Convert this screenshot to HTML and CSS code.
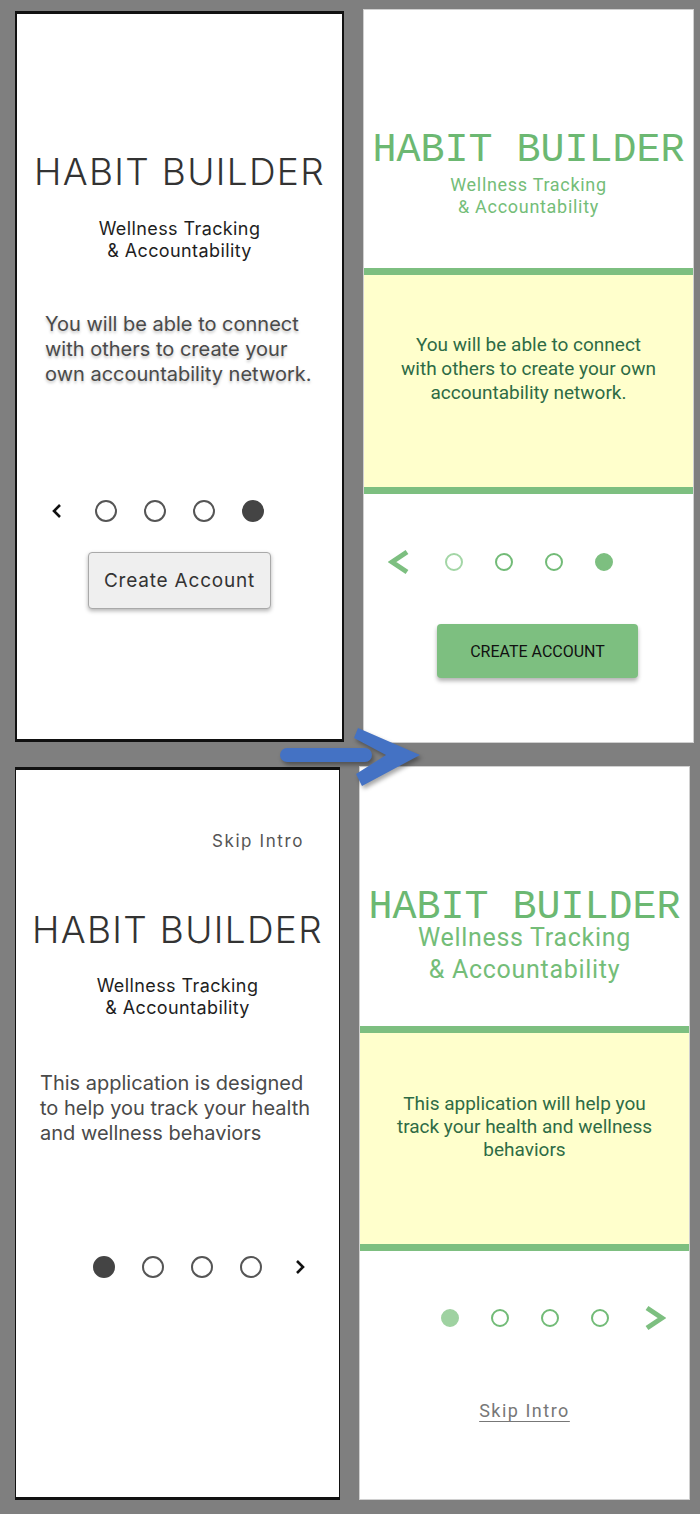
FILE: index.html
```html
<!DOCTYPE html>
<html lang="en">
<head>
  <meta charset="UTF-8">
  <meta name="viewport" content="width=device-width, initial-scale=1.0">
  <title>Habit Builder: Onboarding Wireframes</title>
  <link rel="stylesheet" href="styles.css">
</head>
<body>
  <div class="board">
    <div class="row row-top">
      <!-- wireframe: last intro screen -->
      <section class="screen sketch sketch-last">
        <h1 class="sketch-title">HABIT BUILDER</h1>
        <p class="sketch-tag">Wellness Tracking<br>&amp; Accountability</p>
        <p class="sketch-copy copy-shadow">You will be able to connect<br>with others to create your<br>own accountability network.</p>
        <div class="pager">
          <svg class="chev" viewBox="0 0 22 22"><polyline points="14,5 8,11 14,17"/></svg>
          <span class="dot"></span>
          <span class="dot"></span>
          <span class="dot"></span>
          <span class="dot on"></span>
          <svg class="chev hidden" viewBox="0 0 22 22"><polyline points="8,5 14,11 8,17"/></svg>
        </div>
        <button class="sketch-btn">Create Account</button>
      </section>

      <!-- mockup: last intro screen -->
      <section class="screen final final-top">
        <div class="final-head">
          <h1 class="final-title">HABIT BUILDER</h1>
          <p class="final-tag">Wellness Tracking<br>&amp; Accountability</p>
        </div>
        <div class="band">
          <p>You will be able to connect<br>with others to create your own<br>accountability network.</p>
        </div>
        <div class="pager pager-green">
          <svg class="chev-lg" viewBox="0 0 22 26"><polyline points="19,3 4,13 19,23"/></svg>
          <span class="dot faint"></span>
          <span class="dot"></span>
          <span class="dot"></span>
          <span class="dot on"></span>
          <svg class="chev-lg hidden" viewBox="0 0 22 26"><polyline points="3,3 18,13 3,23"/></svg>
        </div>
        <button class="final-btn">CREATE ACCOUNT</button>
      </section>
    </div>

    <div class="row row-bottom">
      <!-- wireframe: first intro screen -->
      <section class="screen sketch sketch-first">
        <a class="skip-top" href="#">Skip Intro</a>
        <h1 class="sketch-title">HABIT BUILDER</h1>
        <p class="sketch-tag">Wellness Tracking<br>&amp; Accountability</p>
        <p class="sketch-copy">This application is designed<br>to help you track your health<br>and wellness behaviors</p>
        <div class="pager">
          <svg class="chev hidden" viewBox="0 0 22 22"><polyline points="14,5 8,11 14,17"/></svg>
          <span class="dot on"></span>
          <span class="dot"></span>
          <span class="dot"></span>
          <span class="dot"></span>
          <svg class="chev" viewBox="0 0 22 22"><polyline points="8,5 14,11 8,17"/></svg>
        </div>
      </section>

      <!-- mockup: first intro screen -->
      <section class="screen final final-bottom">
        <div class="final-head">
          <h1 class="final-title">HABIT BUILDER</h1>
          <p class="final-tag big">Wellness Tracking<br>&amp; Accountability</p>
        </div>
        <div class="band">
          <p>This application will help you<br>track your health and wellness<br>behaviors</p>
        </div>
        <div class="pager pager-green">
          <svg class="chev-lg hidden" viewBox="0 0 22 26"><polyline points="19,3 4,13 19,23"/></svg>
          <span class="dot on soft"></span>
          <span class="dot"></span>
          <span class="dot"></span>
          <span class="dot"></span>
          <svg class="chev-lg" viewBox="0 0 22 26"><polyline points="3,3 18,13 3,23"/></svg>
        </div>
        <a class="skip-link" href="#">Skip Intro</a>
      </section>
    </div>

    <!-- flow arrow lies over the panel gap -->
    <svg class="flow-arrow" viewBox="0 0 146 66">
      <rect x="2" y="24" width="92" height="14" rx="7"/>
      <polygon points="80,4 142,31 84,62 78,50 108,31 76,14"/>
    </svg>
  </div>
</body>
</html>
```

FILE: styles.css
```css
:root {
  --board-grey: #7f7f7f;
  --green: #7dbf80;
  --green-text: #6cb872;
  --green-dark: #2e6b45;
  --yellow: #ffffcc;
  --ink: #3a3a3a;
}

body {
  margin: 0;
  background-color: var(--board-grey);
  font-family: Inter, 'Noto Sans', sans-serif;
}

.board {
  position: relative;
  height: 1514px;
  padding-top: 9px;
  box-sizing: border-box;
}

.row {
  display: flex;
  align-items: flex-start;
}

.row-bottom {
  margin-top: 23px;
}

.screen {
  box-sizing: border-box;
  background-color: white;
  display: flex;
  flex-direction: column;
  align-items: center;
}

h1, p {
  margin: 0;
  font-weight: normal;
}

/* ---------- wireframes ---------- */

.sketch {
  border: 2px solid #111;
  border-top-width: 3px;
  border-bottom-width: 3px;
  color: var(--ink);
}

.sketch-last {
  width: 329px;
  height: 731px;
  margin-left: 15px;
  margin-top: 2px;
  padding-top: 136px;
}

.sketch-first {
  width: 325px;
  height: 733px;
  margin-left: 15px;
  margin-top: 1px;
  border-left-width: 1px;
  border-right-width: 1px;
}

.sketch-title {
  font-size: 37px;
  line-height: 44px;
  font-weight: 300;
  letter-spacing: 1.3px;
  color: #333;
}

.sketch-tag {
  margin-top: 24px;
  font-size: 18px;
  line-height: 22px;
  font-weight: 400;
  letter-spacing: 0.4px;
  text-align: center;
  color: #1e1e1e;
}

.sketch-copy {
  align-self: stretch;
  margin-top: 50px;
  padding-left: 28px;
  font-size: 20px;
  line-height: 25px;
  color: #4a4a4a;
}

.copy-shadow {
  text-shadow: 0 2px 3px rgba(0, 0, 0, 0.25);
}

.sketch-first .sketch-title {
  margin-top: 57px;
}

.sketch-first .sketch-tag {
  margin-top: 23px;
}

.sketch-first .sketch-copy {
  margin-top: 52px;
  padding-left: 24px;
}

.skip-top {
  align-self: flex-end;
  margin-top: 61px;
  margin-right: 35px;
  font-size: 17px;
  line-height: 20px;
  letter-spacing: 1.6px;
  color: #555;
  text-decoration: none;
}

.pager {
  display: flex;
  align-items: center;
  gap: 27px;
  margin-top: 113px;
}

.sketch-first .pager {
  margin-top: 110px;
}

.dot {
  width: 22px;
  height: 22px;
  box-sizing: border-box;
  border: 2.5px solid #555;
  border-radius: 50%;
}

.dot.on {
  background-color: #444;
  border-color: #444;
}

.chev {
  width: 22px;
  height: 22px;
  fill: none;
  stroke: #111;
  stroke-width: 2.6;
}

.hidden {
  visibility: hidden;
}

.sketch-btn {
  margin-top: 30px;
  width: 183px;
  height: 57px;
  background-color: #efefef;
  border: 1px solid #a9a9a9;
  border-radius: 4px;
  box-shadow: 0 2px 4px rgba(0, 0, 0, 0.3);
  font-family: Inter, sans-serif;
  font-size: 19px;
  letter-spacing: 0.8px;
  color: #333;
}

/* ---------- mockups ---------- */

.final {
  width: 331px;
  height: 734px;
  margin-left: 19px;
  border: 1px solid #d0d0d0;
  font-family: Roboto, sans-serif;
}

.final-head {
  align-self: stretch;
  box-sizing: border-box;
  height: 258px;
  padding-top: 123px;
  text-align: center;
}

.final-bottom .final-head {
  height: 259px;
  padding-top: 123px;
}

.final-title {
  font-family: 'Liberation Mono', monospace;
  font-size: 40px;
  line-height: 36px;
  color: var(--green-text);
}

.final-tag {
  margin-top: 5px;
  font-size: 18px;
  line-height: 22px;
  letter-spacing: 0.7px;
  color: #74bd78;
}

.final-tag.big {
  margin-top: -4px;
  font-size: 25px;
  line-height: 32px;
  letter-spacing: 0.7px;
}

.band {
  align-self: stretch;
  box-sizing: border-box;
  height: 226px;
  padding-top: 58px;
  border-top: 7px solid var(--green);
  border-bottom: 7px solid var(--green);
  background-color: var(--yellow);
  text-align: center;
  font-size: 19px;
  line-height: 24px;
  color: var(--green-dark);
}

.final-bottom .band {
  height: 225px;
  padding-top: 59px;
  line-height: 23px;
}

.pager-green {
  gap: 32px;
  margin-top: 55px;
}

.final-bottom .pager-green {
  margin-top: 54px;
}

.pager-green .dot {
  width: 18px;
  height: 18px;
  border: 2px solid #72bb77;
}

.pager-green .dot.faint {
  border-color: #a3d6a6;
}

.pager-green .dot.on {
  background-color: var(--green);
  border-color: var(--green);
}

.pager-green .dot.soft {
  background-color: #9fd2a1;
  border-color: #9fd2a1;
}

.chev-lg {
  width: 22px;
  height: 26px;
  fill: none;
  stroke: var(--green);
  stroke-width: 5;
  margin: 0 3px;
}

.final-btn {
  margin-top: 49px;
  margin-left: 18px;
  width: 201px;
  height: 54px;
  background-color: var(--green);
  border: none;
  border-radius: 4px;
  box-shadow: 0 3px 4px rgba(0, 0, 0, 0.3);
  font-family: Roboto, sans-serif;
  font-size: 16px;
  font-weight: 400;
  color: #111;
}

.skip-link {
  margin-top: 69px;
  font-size: 18px;
  line-height: 22px;
  letter-spacing: 1.5px;
  color: #777;
  text-underline-offset: 4px;
}

.flow-arrow {
  position: absolute;
  left: 278px;
  top: 724px;
  width: 146px;
  height: 66px;
  fill: #4472c4;
  filter: drop-shadow(2px 3px 2px rgba(0, 0, 0, 0.35));
}
```
